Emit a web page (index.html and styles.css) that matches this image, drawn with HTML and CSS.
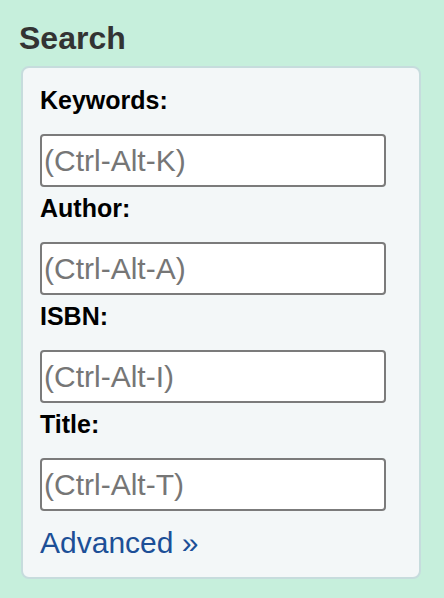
FILE: index.html
```html
<!DOCTYPE html>
<html lang="en">
<head>
<meta charset="utf-8">
<title>Search</title>
<link rel="stylesheet" href="styles.css">
</head>
<body>
<div class="sidebar">
  <h2 class="heading">Search</h2>
  <form class="panel">
    <label class="label" for="kw">Keywords:</label>
    <input class="field" id="kw" type="text" placeholder="(Ctrl-Alt-K)">
    <label class="label" for="au">Author:</label>
    <input class="field" id="au" type="text" placeholder="(Ctrl-Alt-A)">
    <label class="label" for="isbn">ISBN:</label>
    <input class="field" id="isbn" type="text" placeholder="(Ctrl-Alt-I)">
    <label class="label" for="ti">Title:</label>
    <input class="field" id="ti" type="text" placeholder="(Ctrl-Alt-T)">
    <a class="advanced" href="#">Advanced »</a>
  </form>
</div>
</body>
</html>
```
FILE: styles.css
```css
html, body {
  margin: 0;
  padding: 0;
  background: #c6efdc;
  font-family: "Liberation Sans", Arial, Helvetica, sans-serif;
}

.sidebar {
  padding: 20px 0 0 19px;
  width: 402px;
}

.heading {
  margin: 0 0 9px 0;
  font-size: 32px;
  line-height: 37px;
  font-weight: bold;
  color: #333333;
}

.panel {
  box-sizing: border-box;
  margin: 0 0 0 2px;
  width: 400px;
  height: 513px;
  padding: 18px 17px 0 17px;
  background: #f3f7f8;
  border: 2px solid #c6dcdd;
  border-radius: 8px;
  display: flex;
  flex-direction: column;
  align-items: flex-start;
}

.label {
  display: block;
  font-size: 25px;
  line-height: 28px;
  font-weight: bold;
  color: #000000;
  margin: 0 0 20px 0;
}

.field {
  box-sizing: border-box;
  width: 346px;
  height: 53px;
  margin: 0 0 7px 0;
  padding: 0 2px;
  border: 2px solid #7b7b7b;
  border-radius: 4px;
  background: #ffffff;
  font-family: "Liberation Sans", Arial, Helvetica, sans-serif;
  font-size: 30px;
  color: #222222;
}

.field::placeholder {
  color: #767676;
}

.advanced {
  margin-top: 8px;
  font-size: 30px;
  line-height: 34px;
  color: #1c4f97;
  text-decoration: none;
}
```
